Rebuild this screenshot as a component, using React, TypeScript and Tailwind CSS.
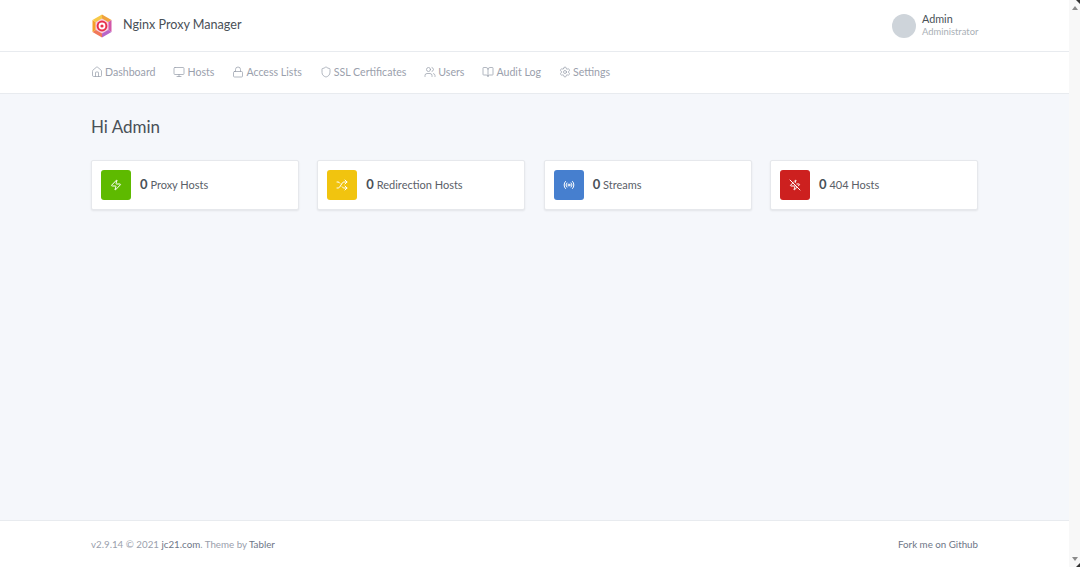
import { Home, Monitor, Lock, Shield, Users, BookOpen, Settings, Zap, Shuffle, Radio, ZapOff } from "lucide-react";

const navItems = [
  { label: "Dashboard", icon: Home },
  { label: "Hosts", icon: Monitor },
  { label: "Access Lists", icon: Lock },
  { label: "SSL Certificates", icon: Shield },
  { label: "Users", icon: Users },
  { label: "Audit Log", icon: BookOpen },
  { label: "Settings", icon: Settings },
];

const stats = [
  { label: "Proxy Hosts", icon: Zap, color: "bg-[#5eba00]" },
  { label: "Redirection Hosts", icon: Shuffle, color: "bg-[#f1c40f]" },
  { label: "Streams", icon: Radio, color: "bg-[#467fcf]" },
  { label: "404 Hosts", icon: ZapOff, color: "bg-[#cd201f]" },
];

function Logo() {
  return (
    <svg width="22" height="24" viewBox="0 0 22 24">
      {/* hexagon split into coloured wedges */}
      <path d="M11 12 11 0.5 20.5 6Z" fill="#f0a23c" />
      <path d="M11 12 20.5 6V18Z" fill="#d257a8" />
      <path d="M11 12 20.5 18 11 23.5Z" fill="#b764c8" />
      <path d="M11 12 11 23.5 1.5 18Z" fill="#f0785a" />
      <path d="M11 12 1.5 18V6Z" fill="#f5a028" />
      <path d="M11 12 1.5 6 11 0.5Z" fill="#f7c948" />
      <path d="M11 4.5 17.5 8.2V15.8L11 19.5 4.5 15.8V8.2Z" fill="#f7cfe0" />
      <circle cx="11" cy="12" r="5.4" fill="#e8304a" />
      <circle cx="11" cy="12" r="3.4" fill="#fff" />
      <circle cx="11" cy="12" r="1.6" fill="#e8304a" />
    </svg>
  );
}

export default function App() {
  return (
    <div className="relative flex h-[567px] overflow-hidden bg-white font-['Lato',sans-serif] text-[#495057]">
      <div className="flex min-w-0 flex-1 flex-col bg-[#f5f7fb]">
        {/* Header */}
        <header className="flex h-[52px] items-center justify-between border-b border-[#e8ebef] bg-white px-[91px]">
          <div className="flex items-center gap-[10px]">
            <Logo />
            <span className="pb-[1px] text-[12.6px]">Nginx Proxy Manager</span>
          </div>
          <div className="flex items-center gap-[6px]">
            <div className="h-6 w-6 rounded-full bg-[#ced4da]" />
            <div className="w-[56px] pb-[1px]">
              <div className="text-[10.8px] leading-[14px]">Admin</div>
              <div className="text-[9.4px] leading-[12px] text-[#aab0b6]">Administrator</div>
            </div>
          </div>
        </header>

        {/* Nav */}
        <nav className="flex h-[42px] items-center gap-[18px] border-b border-[#e8ebef] bg-white px-[91px] text-[10.6px] text-[#9aa0ac]">
          {navItems.map((item) => (
            <div key={item.label} className="flex items-center gap-[2px]">
              <item.icon size={12} strokeWidth={1.5} />
              <span>{item.label}</span>
            </div>
          ))}
        </nav>

        {/* Content */}
        <main className="flex-1 px-[91px] pt-[21px]">
          <h1 className="text-[17px] leading-[24px]">Hi Admin</h1>
          <div className="mt-[21px] grid grid-cols-4 gap-[18.4px]">
            {stats.map((s) => (
              <div key={s.label} className="flex h-[50px] items-center gap-[9px] rounded-[2px] border border-[#e6e8ec] bg-white pl-[9px] shadow-[0_1px_2px_rgba(0,0,0,0.08)]">
                <div className={`flex h-[30px] w-[30px] items-center justify-center rounded-[3px] text-white ${s.color}`}>
                  <s.icon size={12} strokeWidth={2} />
                </div>
                <div className="text-[11px] text-[#5a6068]">
                  <span className="text-[13px] font-bold text-[#495057]">0</span> {s.label}
                </div>
              </div>
            ))}
          </div>
        </main>

        {/* Footer */}
        <footer className="flex h-[47px] items-center justify-between border-t border-[#e8ebef] bg-white px-[91px] text-[9.75px] text-[#9aa0ac]">
          <div>
            v2.9.14 © 2021 <span className="text-[#6e7687]">jc21.com</span>. Theme by <span className="text-[#6e7687]">Tabler</span>
          </div>
          <div className="text-[#6e7687]">Fork me on Github</div>
        </footer>
      </div>

      {/* Scrollbar */}
      <div className="flex w-[11px] flex-col items-center justify-between bg-[#f8f8f8] py-[6px]">
        <div className="h-0 w-0 border-x-[3px] border-b-[4px] border-x-transparent border-b-[#8a8a8a]" />
        <div className="h-0 w-0 border-x-[3px] border-t-[4px] border-x-transparent border-t-[#8a8a8a]" />
      </div>

      {/* Window corners */}
      <div className="absolute right-0 top-0 h-0 w-0 border-l-[4px] border-t-[4px] border-l-transparent border-t-[#333]" />
      <div className="absolute bottom-0 right-0 h-0 w-0 border-b-[4px] border-l-[4px] border-b-[#333] border-l-transparent" />
    </div>
  );
}
